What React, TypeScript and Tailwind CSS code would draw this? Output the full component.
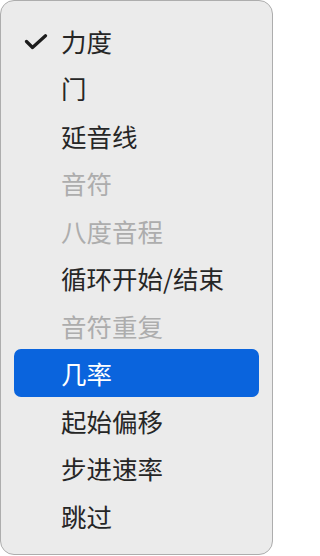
import React from "react";

type Item = { label: string; checked?: boolean; disabled?: boolean; active?: boolean };

const items: Item[] = [
  { label: "力度", checked: true },
  { label: "门" },
  { label: "延音线" },
  { label: "音符", disabled: true },
  { label: "八度音程", disabled: true },
  { label: "循环开始/结束" },
  { label: "音符重复", disabled: true },
  { label: "几率", active: true },
  { label: "起始偏移" },
  { label: "步进速率" },
  { label: "跳过" },
];

function Check() {
  return (
    <svg width="24" height="16" viewBox="0 0 24 16" fill="none">
      <path d="M2.5 7.5 L8.5 13.5 L21.5 1.8" stroke="#1c1c1c" strokeWidth="3.2" strokeLinecap="round" strokeLinejoin="round" />
    </svg>
  );
}

export default function App() {
  return (
    <div className="w-[274px] h-[556px] bg-white">
      <div
        className="w-[273px] h-[555px] rounded-[14px] border border-[#adadad] bg-[#ebebeb] px-[13px] pt-[16px] pb-[15px] flex flex-col"
        style={{ fontFamily: '"Noto Sans CJK SC", "Noto Sans", sans-serif' }}
      >
        {items.map((it) => (
          <div
            key={it.label}
            className={
              "h-[47.6px] flex items-center rounded-[7px] text-[25.5px] " +
              (it.active ? "bg-[#0a64dd] text-white" : it.disabled ? "text-[#adadad]" : "text-[#262626]")
            }
          >
            <div className="w-[47px] shrink-0 pl-[10px] pt-[2px]">{it.checked && <Check />}</div>
            <span className="leading-none">{it.label}</span>
          </div>
        ))}
      </div>
    </div>
  );
}
